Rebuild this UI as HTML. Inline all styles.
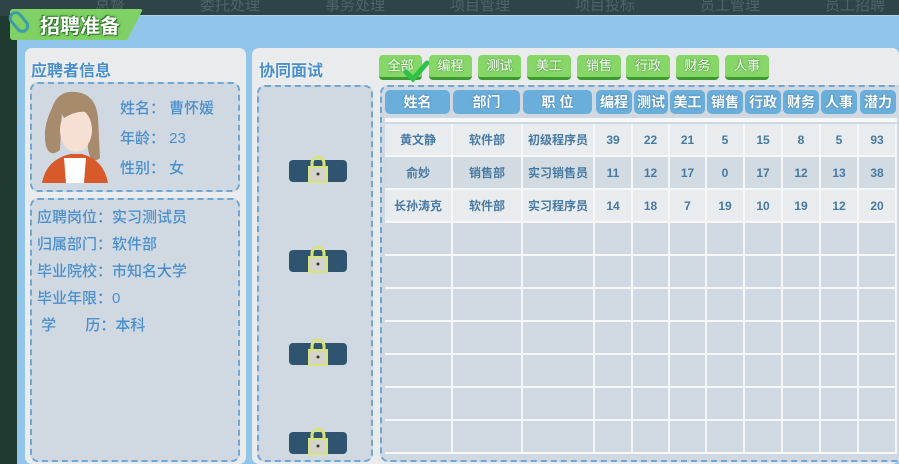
<!DOCTYPE html><html><head><meta charset="utf-8"><style>
*{margin:0;padding:0;box-sizing:border-box}
body{width:899px;height:464px;overflow:hidden;background:#1f3a30;font-family:"Liberation Sans","Noto Sans CJK SC",sans-serif;position:relative}
.a{position:absolute}
.top{left:0;top:0;width:899px;height:16px;background:#2e4446;color:#4f6466;font-size:15px}
.top span{position:absolute;top:-6px}
.main{left:17px;top:15px;width:882px;height:449px;background:#92c5ea;border-top:1px solid #aad3f0}
.card{background:#e9ebed;border-radius:7px}
.dash{border:2px dashed #6ea7d5;border-radius:8px;background:#d0d9e2}
.h{color:#4a8fcd;font-weight:bold;font-size:16px;text-shadow:0 0 2px #fff}
.t{color:#4a8fcd;font-size:15px;font-weight:500}
.btn{top:55px;height:25px;background:#86d768;border-radius:4px;border-bottom:3px solid #3d9a2e;color:#fff;font-size:13px;text-align:center;line-height:22px;text-shadow:0 0 2px #3a8a2a}
.th{top:90px;height:24px;background:#6aaedb;border-radius:5px;color:#fff;font-size:14px;font-weight:bold;text-align:center;line-height:24px;text-shadow:0 0 2px #3b79b0}
.row{left:385px;width:512px;height:33px}
.c{position:absolute;top:0;height:33px;line-height:33px;text-align:center;color:#4679a3;font-size:12px;font-weight:bold;border-right:2px solid #f4f6f8}
.lock{width:58px;height:22px;background:#2f5470;border-radius:4px}
</style></head><body>
<div class="a top"><span style="left:95px">总督</span><span style="left:200px">委托处理</span><span style="left:325px">事务处理</span><span style="left:450px">项目管理</span><span style="left:575px">项目投标</span><span style="left:700px">员工管理</span><span style="left:825px">员工招聘</span></div>
<div class="a main"></div>
<div class="a" style="left:10px;top:9px;width:133px;height:31px;background:#7fd165;clip-path:polygon(0 0,100% 0,88% 100%,0 100%);border-radius:3px"></div>
<div class="a" style="left:12px;top:10px;width:14px;height:24px;border:3px solid #3f9ca6;border-radius:7px;transform:rotate(-40deg)"></div>
<div class="a" style="left:40px;top:10px;color:#fff;font-size:20px;font-weight:bold;text-shadow:0 0 3px #2e7a25,1px 1px 0 #2e7a25,-1px -1px 0 #2e7a25">招聘准备</div>

<div class="a card" style="left:25px;top:48px;width:221px;height:416px"></div>
<div class="a h" style="left:31px;top:57px">应聘者信息</div>
<div class="a dash" style="left:30px;top:82px;width:210px;height:110px"></div>
<svg class="a" style="left:40px;top:88px" width="70" height="95" viewBox="0 0 70 95">
<path d="M12 20 Q18 2 36 4 Q56 6 58 30 L60 70 Q50 78 48 60 L46 30 Q30 30 22 22 L20 62 Q10 70 6 58 Q2 40 12 20Z" fill="#a88a6c"/>
<ellipse cx="36" cy="42" rx="16" ry="22" fill="#f6e0d4"/>
<path d="M20 22 Q36 14 52 26 Q40 20 24 30Z" fill="#a88a6c"/>
<path d="M2 95 Q6 72 30 66 L42 66 Q64 72 68 95Z" fill="#d85a2a"/>
<path d="M24 70 L46 70 L44 95 L26 95Z" fill="#fff"/>
</svg>
<div class="a t" style="left:120px;top:97px">姓名：&nbsp;曹怀媛</div>
<div class="a t" style="left:120px;top:127px">年龄：&nbsp;23</div>
<div class="a t" style="left:120px;top:157px">性别：&nbsp;女</div>
<div class="a dash" style="left:30px;top:198px;width:210px;height:264px"></div>
<div class="a t" style="left:37px;top:204px;line-height:27px">应聘岗位：实习测试员<br>归属部门：软件部<br>毕业院校：市知名大学<br>毕业年限：0<br>&nbsp;学&nbsp;&nbsp;&nbsp;&nbsp;&nbsp;&nbsp;&nbsp;历：本科</div>

<div class="a card" style="left:252px;top:48px;width:647px;height:416px"></div>
<div class="a h" style="left:259px;top:57px">协同面试</div>
<div class="a dash" style="left:257px;top:85px;width:116px;height:377px"></div>
<div class="a lock" style="left:289px;top:160px"></div><div class="a lock" style="left:289px;top:250px"></div><div class="a lock" style="left:289px;top:343px"></div><div class="a lock" style="left:289px;top:432px"></div>
<svg class="a" style="left:307px;top:155px" width="22" height="30"><path d="M5 13 V8 a6 6 0 0 1 12 0 V13" stroke="#d8e37a" stroke-width="3" fill="none"/><rect x="2" y="12" width="18" height="15" fill="#d4d4cc" stroke="#d8e37a" stroke-width="2"/><circle cx="11" cy="19" r="1.5" fill="#333"/></svg>
<svg class="a" style="left:307px;top:245px" width="22" height="30"><path d="M5 13 V8 a6 6 0 0 1 12 0 V13" stroke="#d8e37a" stroke-width="3" fill="none"/><rect x="2" y="12" width="18" height="15" fill="#d4d4cc" stroke="#d8e37a" stroke-width="2"/><circle cx="11" cy="19" r="1.5" fill="#333"/></svg>
<svg class="a" style="left:307px;top:338px" width="22" height="30"><path d="M5 13 V8 a6 6 0 0 1 12 0 V13" stroke="#d8e37a" stroke-width="3" fill="none"/><rect x="2" y="12" width="18" height="15" fill="#d4d4cc" stroke="#d8e37a" stroke-width="2"/><circle cx="11" cy="19" r="1.5" fill="#333"/></svg>
<svg class="a" style="left:307px;top:427px" width="22" height="30"><path d="M5 13 V8 a6 6 0 0 1 12 0 V13" stroke="#d8e37a" stroke-width="3" fill="none"/><rect x="2" y="12" width="18" height="15" fill="#d4d4cc" stroke="#d8e37a" stroke-width="2"/><circle cx="11" cy="19" r="1.5" fill="#333"/></svg>

<div class="a btn" style="left:379px;width:43px">全部</div>
<svg class="a" style="left:403px;top:60px" width="26" height="22"><path d="M3 12 L10 19 L24 3" stroke="#2fc24a" stroke-width="5" fill="none" stroke-linecap="round"/></svg>
<div class="a btn" style="left:429px;width:43px">编程</div>
<div class="a btn" style="left:478px;width:43px">测试</div>
<div class="a btn" style="left:527px;width:44px">美工</div>
<div class="a btn" style="left:577px;width:44px">销售</div>
<div class="a btn" style="left:626px;width:44px">行政</div>
<div class="a btn" style="left:676px;width:43px">财务</div>
<div class="a btn" style="left:725px;width:44px">人事</div>

<div class="a dash" style="left:380px;top:85px;width:525px;height:377px"></div>
<div class="a th" style="left:385px;width:65px">姓名</div>
<div class="a th" style="left:453px;width:67px">部门</div>
<div class="a th" style="left:523px;width:69px">职 位</div>
<div class="a th" style="left:596px;width:36px">编程</div>
<div class="a th" style="left:634px;width:34px">测试</div>
<div class="a th" style="left:670px;width:35px">美工</div>
<div class="a th" style="left:707px;width:36px">销售</div>
<div class="a th" style="left:745px;width:36px">行政</div>
<div class="a th" style="left:783px;width:36px">财务</div>
<div class="a th" style="left:821px;width:36px">人事</div>
<div class="a th" style="left:860px;width:36px">潜力</div>
<div class="a" style="left:385px;top:118px;width:512px;height:4px;background:#f6f8fa"></div>

<div id="rows"></div>
<script>
var cols=[[0,68],[68,70],[138,72],[210,38],[248,37],[285,37],[322,38],[360,38],[398,38],[436,38],[474,38]];
var data=[["黄文静","软件部","初级程序员",39,22,21,5,15,8,5,93],["俞妙","销售部","实习销售员",11,12,17,0,17,12,13,38],["长孙涛克","软件部","实习程序员",14,18,7,19,10,19,12,20]];
var h="";
for(var r=0;r<10;r++){var y=124+r*33;var bg=r<3?(r%2==0?"#e8ecef":"#d3dbe2"):"#d0d9e2";
h+='<div class="a row" style="top:'+y+'px;background:'+bg+';border-bottom:2px solid #f4f6f8">';
for(var c=0;c<11;c++){var t=r<3?data[r][c]:"";h+='<div class="c" style="left:'+cols[c][0]+'px;width:'+cols[c][1]+'px">'+t+'</div>';}
h+='</div>';}
document.getElementById("rows").outerHTML=h;
</script>
</body></html>
